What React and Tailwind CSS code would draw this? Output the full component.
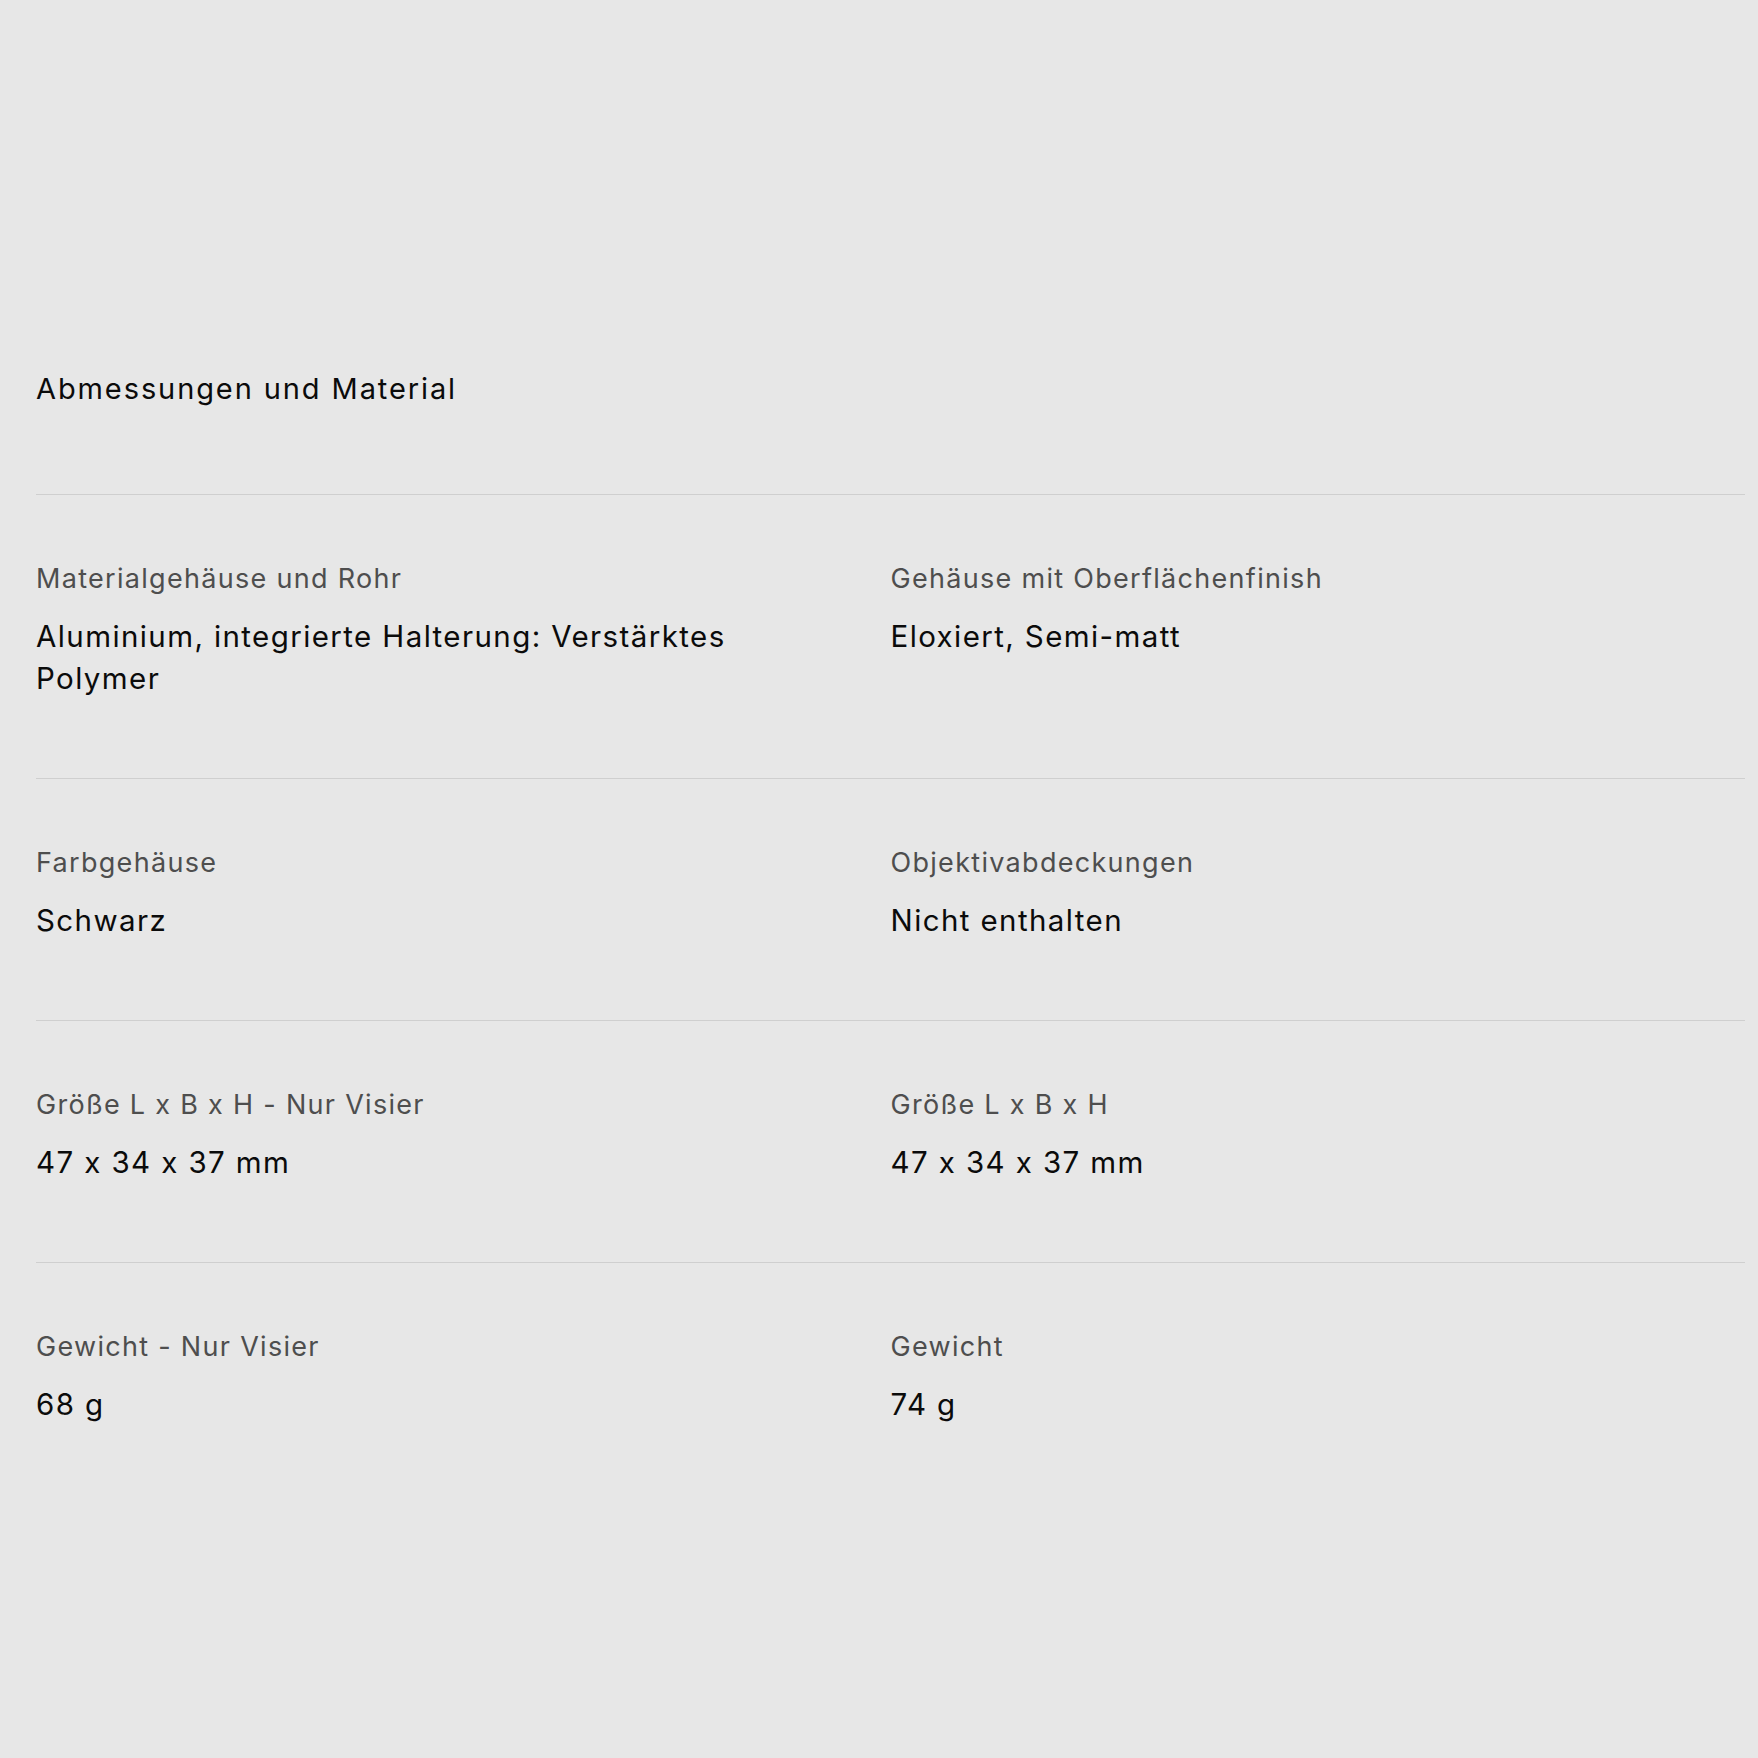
import React from "react";

const rows = [
  [
    ["Materialgehäuse und Rohr", "Aluminium, integrierte Halterung: Verstärktes Polymer"],
    ["Gehäuse mit Oberflächenfinish", "Eloxiert, Semi-matt"],
  ],
  [
    ["Farbgehäuse", "Schwarz"],
    ["Objektivabdeckungen", "Nicht enthalten"],
  ],
  [
    ["Größe L x B x H - Nur Visier", "47 x 34 x 37 mm"],
    ["Größe L x B x H", "47 x 34 x 37 mm"],
  ],
  [
    ["Gewicht - Nur Visier", "68 g"],
    ["Gewicht", "74 g"],
  ],
];

function Cell({ label, value }) {
  return (
    <div className="pr-[60px]">
      <div className="text-[27px] leading-[36px] tracking-[1.3px] text-[#4e4e4e]">{label}</div>
      <div className="mt-[18px] text-[29.5px] leading-[42px] tracking-[1.4px] text-[#0b0b0b]">{value}</div>
    </div>
  );
}

export default function App() {
  return (
    <div className="min-h-screen bg-[#e7e7e7] pl-[36px] pr-[13px] pt-[369px] pb-[100px] font-['Inter','Noto_Sans',sans-serif]">
      <h2 className="text-[29px] leading-[40px] tracking-[1.9px] text-[#0b0b0b] mb-[85px]">Abmessungen und Material</h2>
      <div>
        {rows.map((r, i) => (
          <div key={i} className={`grid grid-cols-2 border-t border-[#cfcfcf] pt-[66px] ${i === rows.length - 1 ? "pb-[0px]" : "pb-[79px]"}`}>
            {r.map(([l, v]) => (
              <Cell key={l} label={l} value={v} />
            ))}
          </div>
        ))}
      </div>
    </div>
  );
}
